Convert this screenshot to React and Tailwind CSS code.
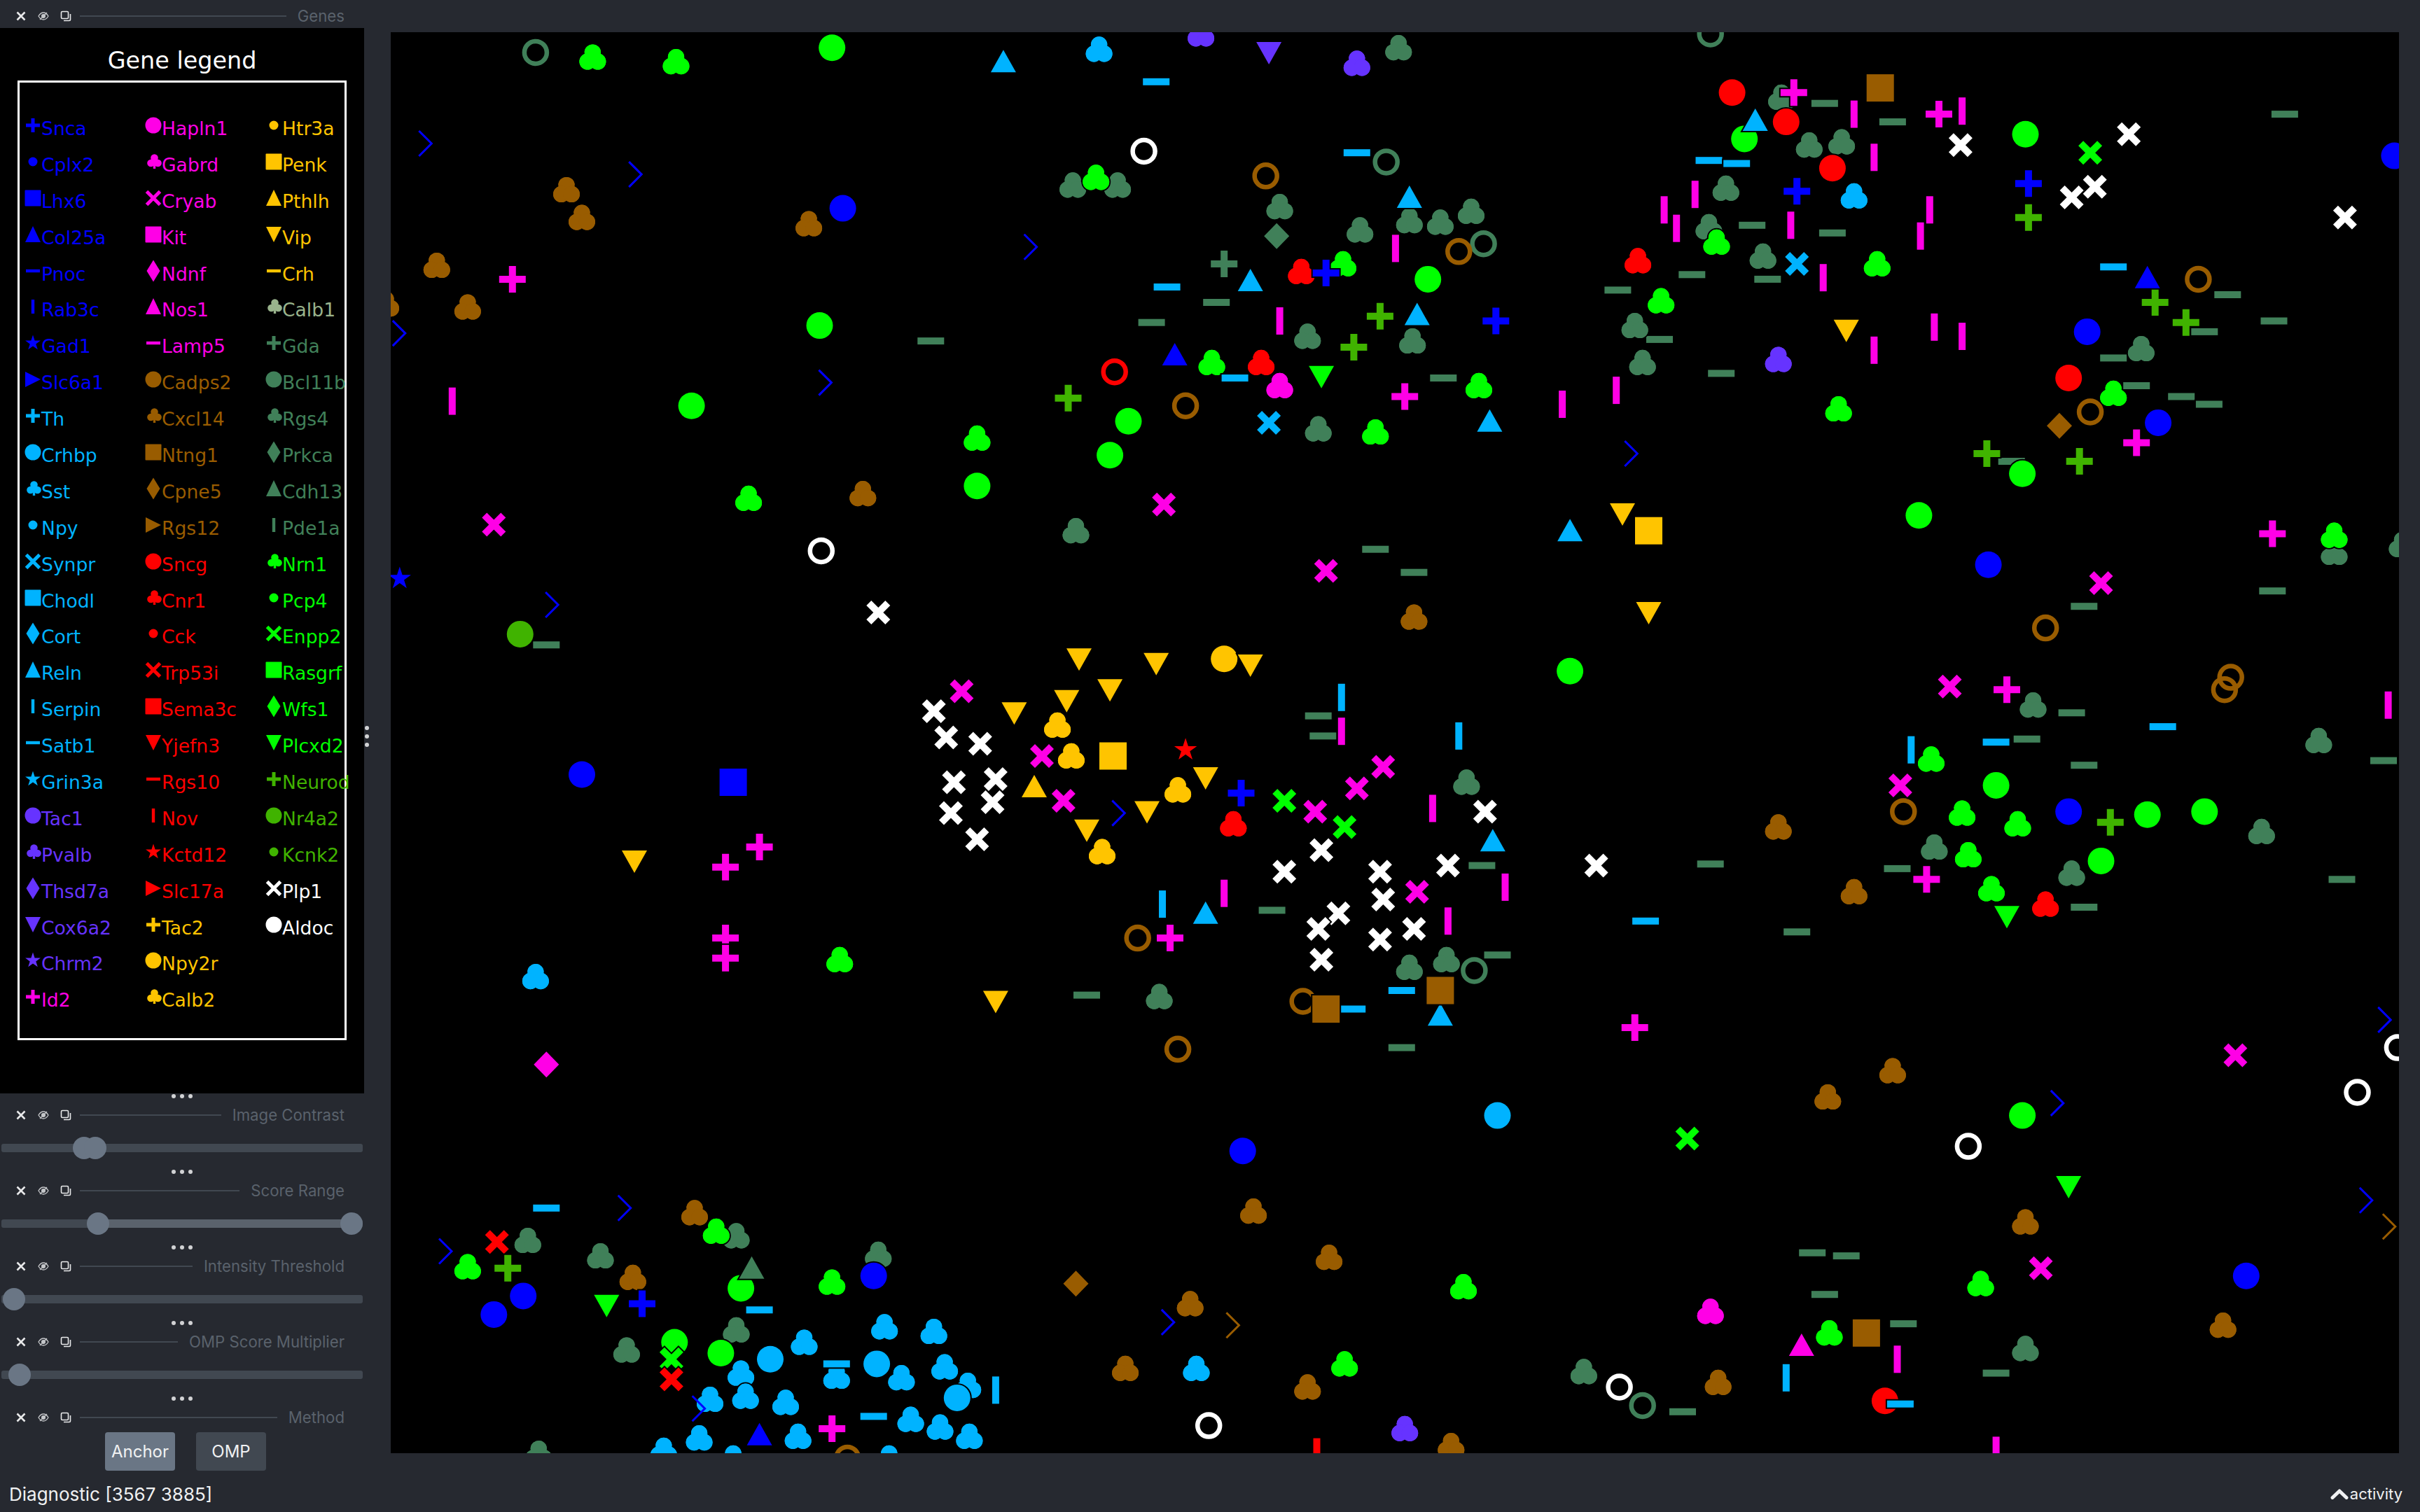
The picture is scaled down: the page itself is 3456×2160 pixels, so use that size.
import React from 'react';

const COLORS = {
  b: '#0000ff', m: '#ff00e6', c: '#00b3ff', p: '#6633ff', n: '#995c00', R: '#ff0000',
  Y: '#ffc400', g: '#408059', G: '#00ff00', o: '#40b300', w: '#ffffff', s: '#99b38c',
};

const LEGEND = [
  [['+','b','Snca'],['.','b','Cplx2'],['s','b','Lhx6'],['^','b','Col25a'],['_','b','Pnoc'],['|','b','Rab3c'],['*','b','Gad1'],['>','b','Slc6a1'],['+','c','Th'],['o','c','Crhbp'],['k','c','Sst'],['.','c','Npy'],['x','c','Synpr'],['s','c','Chodl'],['d','c','Cort'],['^','c','Reln'],['|','c','Serpin'],['_','c','Satb1'],['*','c','Grin3a'],['o','p','Tac1'],['k','p','Pvalb'],['d','p','Thsd7a'],['v','p','Cox6a2'],['*','p','Chrm2'],['+','m','Id2']],
  [['o','m','Hapln1'],['k','m','Gabrd'],['x','m','Cryab'],['s','m','Kit'],['d','m','Ndnf'],['^','m','Nos1'],['_','m','Lamp5'],['o','n','Cadps2'],['k','n','Cxcl14'],['s','n','Ntng1'],['d','n','Cpne5'],['>','n','Rgs12'],['o','R','Sncg'],['k','R','Cnr1'],['.','R','Cck'],['x','R','Trp53i'],['s','R','Sema3c'],['v','R','Yjefn3'],['_','R','Rgs10'],['|','R','Nov'],['*','R','Kctd12'],['>','R','Slc17a'],['+','Y','Tac2'],['o','Y','Npy2r'],['k','Y','Calb2']],
  [['.','Y','Htr3a'],['s','Y','Penk'],['^','Y','Pthlh'],['v','Y','Vip'],['_','Y','Crh'],['k','s','Calb1'],['+','g','Gda'],['o','g','Bcl11b'],['k','g','Rgs4'],['d','g','Prkca'],['^','g','Cdh13'],['|','g','Pde1a'],['k','G','Nrn1'],['.','G','Pcp4'],['x','G','Enpp2'],['s','G','Rasgrf'],['d','G','Wfs1'],['v','G','Plcxd2'],['+','o','Neurod'],['o','o','Nr4a2'],['.','o','Kcnk2'],['x','w','Plp1'],['o','w','Aldoc']],
];

// spots on the canvas, shape + colour then x,y in the 1568 wide picture
const SPOTS = `
-g 603,221 746,209 788,196 935,245 891,356 916,371 354,418 854,464 857,477 960,561 824,590 970,619 908,679 704,645 1182,67 1226,79 1480,74 1135,146 1187,151 1145,181 1096,178 1048,188 1075,220 1443,191 1428,215 1473,208 1369,232 1115,242 1384,250 1413,257 1431,262 1303,299 1472,383 1350,393 1342,462 1313,479 1544,493 1350,496 1229,563 1517,570 1350,588 1164,604 1108,560 1174,812 1196,814 1182,839 1233,858 1090,915 1293,890
kg 906,31 695,120 724,120 829,134 881,149 913,143 933,144 953,137 847,218 915,221 854,278 697,344 950,507 913,627 937,622 751,646 342,804 477,801 389,814 569,813 477,862 406,875 349,942 1172,94 1193,92 1118,122 1107,147 1142,166 1059,211 1064,235 1387,226 1512,358 1556,353 1317,457 1502,480 1465,539 1253,549 1342,566 1312,874 1026,889 1154,63
kG 384,37 438,40 710,115 870,171 785,235 958,250 891,280 633,284 485,323 544,622 464,798 303,821 539,831 948,834 871,884 1112,157 1216,171 1076,195 1191,265 1512,347 1251,492 1271,527 1307,534 1275,554 1290,576 1283,832 1185,864 1369,255
kn 367,123 377,141 524,145 283,172 303,199 250,197 559,320 916,400 450,786 410,828 812,785 861,815 771,845 729,887 847,899 940,937 1152,536 1201,578 1226,694 1184,711 1312,792 1440,859 1113,896
kc 712,32 347,633 521,870 573,860 605,863 480,890 483,905 542,892 509,909 584,893 612,886 627,898 460,907 453,932 430,940 517,931 590,920 609,925 628,931 475,945 576,945 775,887 1201,127
kp 778,22 879,41 910,926 1152,233
kR 817,235 843,176 799,534 1061,169 1325,586
km 829,250 1108,850
kY 685,470 694,490 763,512 714,552
cG 539,31 925,181 531,211 448,263 731,273 719,295 633,315 1130,90 1312,87 1310,307 1243,334 1017,435 1293,509 1391,528 1428,526 1361,558 1310,723 480,835 437,870 467,877
cb 546,135 377,502 805,746 566,827 339,840 320,852 1551,101 1352,215 1398,274 1288,366 1340,526 1455,827
cR 1122,60 1157,79 1187,109 1340,245 1221,908
cc 970,723 499,881 568,884 620,906
cY 793,427
co 337,411
-c 749,53 879,99 756,186 800,245 908,642 876,654 354,783 492,849 542,884 566,918 1066,597 1107,104 1125,106 1369,173 1401,471 1293,481 1231,910
|m 904,161 829,208 293,260 1012,262 1047,253 869,474 928,524 975,575 793,579 938,597 1201,74 1271,72 1214,102 1078,136 1098,126 1086,148 1250,136 1244,153 1160,146 1181,180 1253,212 1271,218 1214,227 1547,457 1229,881 1293,940
|c 869,452 945,477 753,586 645,901 1238,486 1157,893
|R 853,941
rg 347,34 1108,22 898,105 961,158 955,629 1064,911
rn 820,114 945,163 768,263 737,608 844,649 763,680 549,945 1424,181 1354,267 1325,407 1445,439 1441,447 1233,526
rR 722,241
rw 741,98 532,357 783,924 1553,679 1527,708 1275,743 1049,899
xw 569,397 605,461 613,478 635,482 645,505 618,507 643,520 616,527 633,544 962,526 856,551 832,565 894,565 938,561 896,583 867,592 854,602 856,622 894,609 916,602 1034,561 1270,94 1379,87 1357,121 1342,128 1519,141
xm 754,327 320,340 859,370 623,448 675,490 689,519 852,526 879,511 896,497 918,578 1361,378 1263,445 1231,509 1448,684 1322,822
xG 832,519 871,536 435,881 1093,738 1354,99
xc 822,274 1164,171
xR 322,805 435,894
+m 332,181 910,257 758,608 470,562 492,549 470,608 470,621 539,926 1059,666 1162,60 1256,74 1384,287 1472,346 1300,447 1248,570
+b 859,177 969,208 804,514 416,845 1164,124 1314,119
+g 793,171
+o 894,205 877,225 692,258 329,822 1314,141 1396,196 1416,209 1287,294 1347,299 1367,533
^c 650,40 913,128 810,182 918,204 965,273 967,545 781,592 933,658 1137,78 1017,344
^b 761,230 492,930 1391,180
^Y 670,510
^g 487,822
^m 1167,872
vY 699,427 749,430 719,447 691,454 657,462 810,431 781,504 743,526 704,538 411,558 645,649 1196,214 1051,333 1068,397
vG 856,244 393,846 1300,594 1340,769
vp 822,34
sn 1218,57 933,642 859,654 1209,864
sY 721,490 1068,344
sb 475,507
dg 827,153
dm 354,690
dn 697,832 1334,276
*b 259,375
*R 768,486
>b 276,93 412,113 668,160 259,216 535,248 358,392 725,527 405,783 289,811 757,857 453,913 1057,294 1545,661 1333,715 1533,778
>n 799,859 1548,795
`.trim().split('\n').flatMap((line) => {
  const [code, ...points] = line.split(' ');
  return points.map((p) => {
    const [x, y] = p.split(',').map(Number);
    return { shape: code[0], color: COLORS[code[1]], x: x * 2.2048 - 558.2, y: y * 2.2041 - 46 };
  });
});

function starPoints(R, r) {
  const pts = [];
  for (let i = 0; i < 10; i++) {
    const a = -Math.PI / 2 + (i * Math.PI) / 5;
    const d = i % 2 === 0 ? R : r;
    pts.push(`${(Math.cos(a) * d).toFixed(1)},${(Math.sin(a) * d).toFixed(1)}`);
  }
  return pts.join(' ');
}

const CROSS = '-17,-10 -10,-17 0,-7 10,-17 17,-10 7,0 17,10 10,17 0,7 -10,17 -17,10 -7,0';

function ClubLobes() {
  return (
    <>
      <circle cx="0" cy="-6.5" r="11.7" />
      <circle cx="-7.3" cy="6.3" r="11.7" />
      <circle cx="7.3" cy="6.3" r="11.7" />
    </>
  );
}

function Club() {
  // lobes are drawn twice so the black edge only shows around the outside
  return (
    <>
      <ClubLobes />
      <g stroke="none">
        <ClubLobes />
      </g>
    </>
  );
}

function Spot({ shape }) {
  switch (shape) {
    case 'c': return <circle r="19" />;
    case 'r': return <circle r="16" fill="none" stroke="currentColor" strokeWidth="6.5" />;
    case '+': return <path d="M-5,-19h10v14h14v10h-14v14h-10v-14h-14v-10h14z" />;
    case 'x': return <polygon points={CROSS} />;
    case 's': return <rect x="-19.5" y="-19.5" width="39" height="39" />;
    case '^': return <polygon points="0,-17 18,15 -18,15" />;
    case 'v': return <polygon points="-18,-15 18,-15 0,17" />;
    case '-': return <rect x="-19" y="-5" width="38" height="10" />;
    case '|': return <rect x="-5" y="-19.5" width="10" height="39" />;
    case 'k': return <Club />;
    case 'd': return <polygon points="0,-18.5 18,0 0,18.5 -18,0" />;
    case '*': return <polygon points={starPoints(17, 6.5)} />;
    case '>': return <polyline points="-10,-18 8,0 -10,18" fill="none" stroke="currentColor" strokeWidth="3" />;
    default: return null;
  }
}

function LegendMark({ shape }) {
  switch (shape) {
    case '+': return <path d="M-2.5,-10h5v7.5h7.5v5h-7.5v7.5h-5v-7.5h-7.5v-5h7.5z" />;
    case '.': return <circle r="6.5" />;
    case 'o': return <circle r="11.5" />;
    case 's': return <rect x="-11.5" y="-11.5" width="23" height="23" rx="1" />;
    case '^': return <polygon points="0,-12 11,11 -11,11" />;
    case 'v': return <polygon points="-11,-11 11,-11 0,11" />;
    case '>': return <polygon points="-11,-11 11,0 -11,11" />;
    case '_': return <rect x="-10" y="-2.2" width="20" height="4.4" />;
    case '|': return <rect x="-2.2" y="-10" width="4.4" height="20" />;
    case '*': return <polygon points={starPoints(11.5, 4.5)} />;
    case 'k':
      return (
        <g transform="translate(1.5 0)">
          <circle cx="0" cy="-5.5" r="5.3" />
          <circle cx="-5" cy="2" r="5.3" />
          <circle cx="5" cy="2" r="5.3" />
          <rect x="-1.7" y="-2" width="3.4" height="12" />
        </g>
      );
    case 'x': return <path d="M-9.5,-9.5L9.5,9.5M9.5,-9.5L-9.5,9.5" stroke="currentColor" strokeWidth="5" />;
    case 'd': return <polygon points="0,-15.5 9.5,0 0,15.5 -9.5,0" />;
    default: return null;
  }
}

function GeneLegend() {
  return (
    <div className="h-[1522px] bg-black pl-[25px] font-['DejaVu_Sans',sans-serif]">
      <div className="h-[75px] w-[470px] pt-[22px] text-center text-[33.4px] leading-[50px] text-white">Gene legend</div>
      <div className="grid h-[1371px] w-[470px] grid-cols-[172px_172px_auto] border-[3px] border-white pl-[7px] pt-[43px]">
        {LEGEND.map((col, i) => (
          <div key={i}>
            {col.map(([shape, color, name]) => (
              <div key={name} className="flex h-[51.9px] items-start" style={{ color: COLORS[color] }}>
                <svg viewBox="-12 -18 24 36" className="h-[36px] w-[24px] shrink-0 overflow-visible" fill="currentColor">
                  <LegendMark shape={shape} />
                </svg>
                <span className="mt-[5px] whitespace-nowrap text-[26.6px] leading-[36px]">{name}</span>
              </div>
            ))}
          </div>
        ))}
      </div>
    </div>
  );
}

function TitleBar({ title }) {
  return (
    <div className="flex items-center pl-[22px] pr-[28px] text-[#5a626c]">
      <svg viewBox="0 0 16 16" className="h-[16px] w-[16px] shrink-0" fill="none" stroke="#e8e9ea" strokeWidth="2.6">
        <path d="M2.5 2.5l11 11M13.5 2.5l-11 11" />
      </svg>
      <svg viewBox="0 0 16 16" className="ml-[16px] h-[16px] w-[16px] shrink-0" fill="none" stroke="#c4c6c9" strokeWidth="1.3">
        <path d="M1 8c2-3.4 4.4-5 7-5s5 1.6 7 5c-2 3.4-4.4 5-7 5s-5-1.6-7-5z" />
        <circle cx="8" cy="8" r="2.4" fill="#c4c6c9" />
        <path d="M3 13L13 3" />
      </svg>
      <svg viewBox="0 0 16 16" className="ml-[16px] h-[16px] w-[16px] shrink-0" fill="none" stroke="#e8e9ea" strokeWidth="1.6">
        <rect x="1.5" y="1.5" width="10" height="10" rx="1.5" />
        <path d="M14.5 5v8a1.5 1.5 0 0 1-1.5 1.5H5" />
      </svg>
      <div className="ml-[12px] h-[2px] flex-1 bg-[#414851]" />
      <span className="ml-[16px] whitespace-nowrap font-['Inter',sans-serif] text-[22.2px] leading-[24px]">{title}</span>
    </div>
  );
}

function Dots() {
  return (
    <div className="flex h-[16px] items-center justify-center gap-[6px]">
      <span className="h-[6px] w-[6px] rounded-full bg-[#d1d2d4]" />
      <span className="h-[6px] w-[6px] rounded-full bg-[#d1d2d4]" />
      <span className="h-[6px] w-[6px] rounded-full bg-[#d1d2d4]" />
    </div>
  );
}

function SliderDock({ title, thumbs, range }) {
  return (
    <div className="h-[108px]">
      <Dots />
      <div className="flex h-[38px] flex-col justify-center">
        <TitleBar title={title} />
      </div>
      <div className="relative mx-[2px] mt-[22px] h-[12px] rounded-[3px] bg-[#414851]">
        {range && (
          <div className="absolute inset-y-0 bg-[#5a626c]" style={{ left: thumbs[0] - 2, width: thumbs[1] - thumbs[0] }} />
        )}
        {thumbs.map((c) => (
          <div key={c} className="absolute top-[-10px] h-[32px] w-[32px] rounded-full bg-[#6a7685]" style={{ left: c - 18 }} />
        ))}
      </div>
    </div>
  );
}

function LeftPanel() {
  return (
    <aside className="w-[520px] shrink-0">
      <div className="flex h-[40px] flex-col justify-center pt-[6px]">
        <TitleBar title="Genes" />
      </div>
      <GeneLegend />
      <div className="-mt-[4px]">
        <SliderDock title="Image Contrast" thumbs={[120, 136]} />
        <SliderDock title="Score Range" thumbs={[140, 502]} range />
        <SliderDock title="Intensity Threshold" thumbs={[20]} />
        <SliderDock title="OMP Score Multiplier" thumbs={[28]} />
        <Dots />
        <div className="flex h-[38px] flex-col justify-center">
          <TitleBar title="Method" />
        </div>
        <div className="mt-[2px] flex gap-[30px] pl-[150px] font-['Inter',sans-serif] text-[24px] text-[#f0f1f2]">
          <button className="h-[55px] w-[100px] rounded-[4px] bg-[#6a7685]">Anchor</button>
          <button className="h-[55px] w-[100px] rounded-[4px] bg-[#414851]">OMP</button>
        </div>
      </div>
    </aside>
  );
}

export default function App() {
  return (
    <div className="flex h-[2160px] w-[3456px] flex-col overflow-hidden bg-[#262930] font-['Inter',sans-serif]">
      <div className="flex h-[2108px]">
        <LeftPanel />
        <div className="flex w-[38px] shrink-0 flex-col items-start justify-center gap-[6px] pb-[4px] pl-[1px]">
          <span className="h-[6px] w-[6px] rounded-full bg-[#d1d2d4]" />
          <span className="h-[6px] w-[6px] rounded-full bg-[#d1d2d4]" />
          <span className="h-[6px] w-[6px] rounded-full bg-[#d1d2d4]" />
        </div>
        <div className="flex-1 pb-[32px] pr-[30px] pt-[46px]">
          <div className="h-full w-full bg-black">
            <svg className="h-full w-full" viewBox="0 0 2868 2030" fill="currentColor">
              {SPOTS.map((s, i) => (
                <g key={i} transform={`translate(${s.x.toFixed(1)} ${s.y.toFixed(1)})`} color={s.color} fill={s.color} stroke="#000" strokeWidth="4" paintOrder="stroke">
                  <Spot shape={s.shape} />
                </g>
              ))}
            </svg>
          </div>
        </div>
      </div>
      <div className="flex h-[52px] items-center justify-between pl-[13px] pr-[25px] text-[#f0f1f2]">
        <span className="text-[26px]">Diagnostic [3567 3885]</span>
        <div className="flex items-center">
          <svg viewBox="0 0 26 16" className="h-[16px] w-[26px]" fill="none" stroke="#f0f1f2" strokeWidth="5" strokeLinecap="round" strokeLinejoin="round">
            <path d="M3 13.5L13 4l10 9.5" />
          </svg>
          <span className="ml-[2px] text-[22px]">activity</span>
        </div>
      </div>
    </div>
  );
}
